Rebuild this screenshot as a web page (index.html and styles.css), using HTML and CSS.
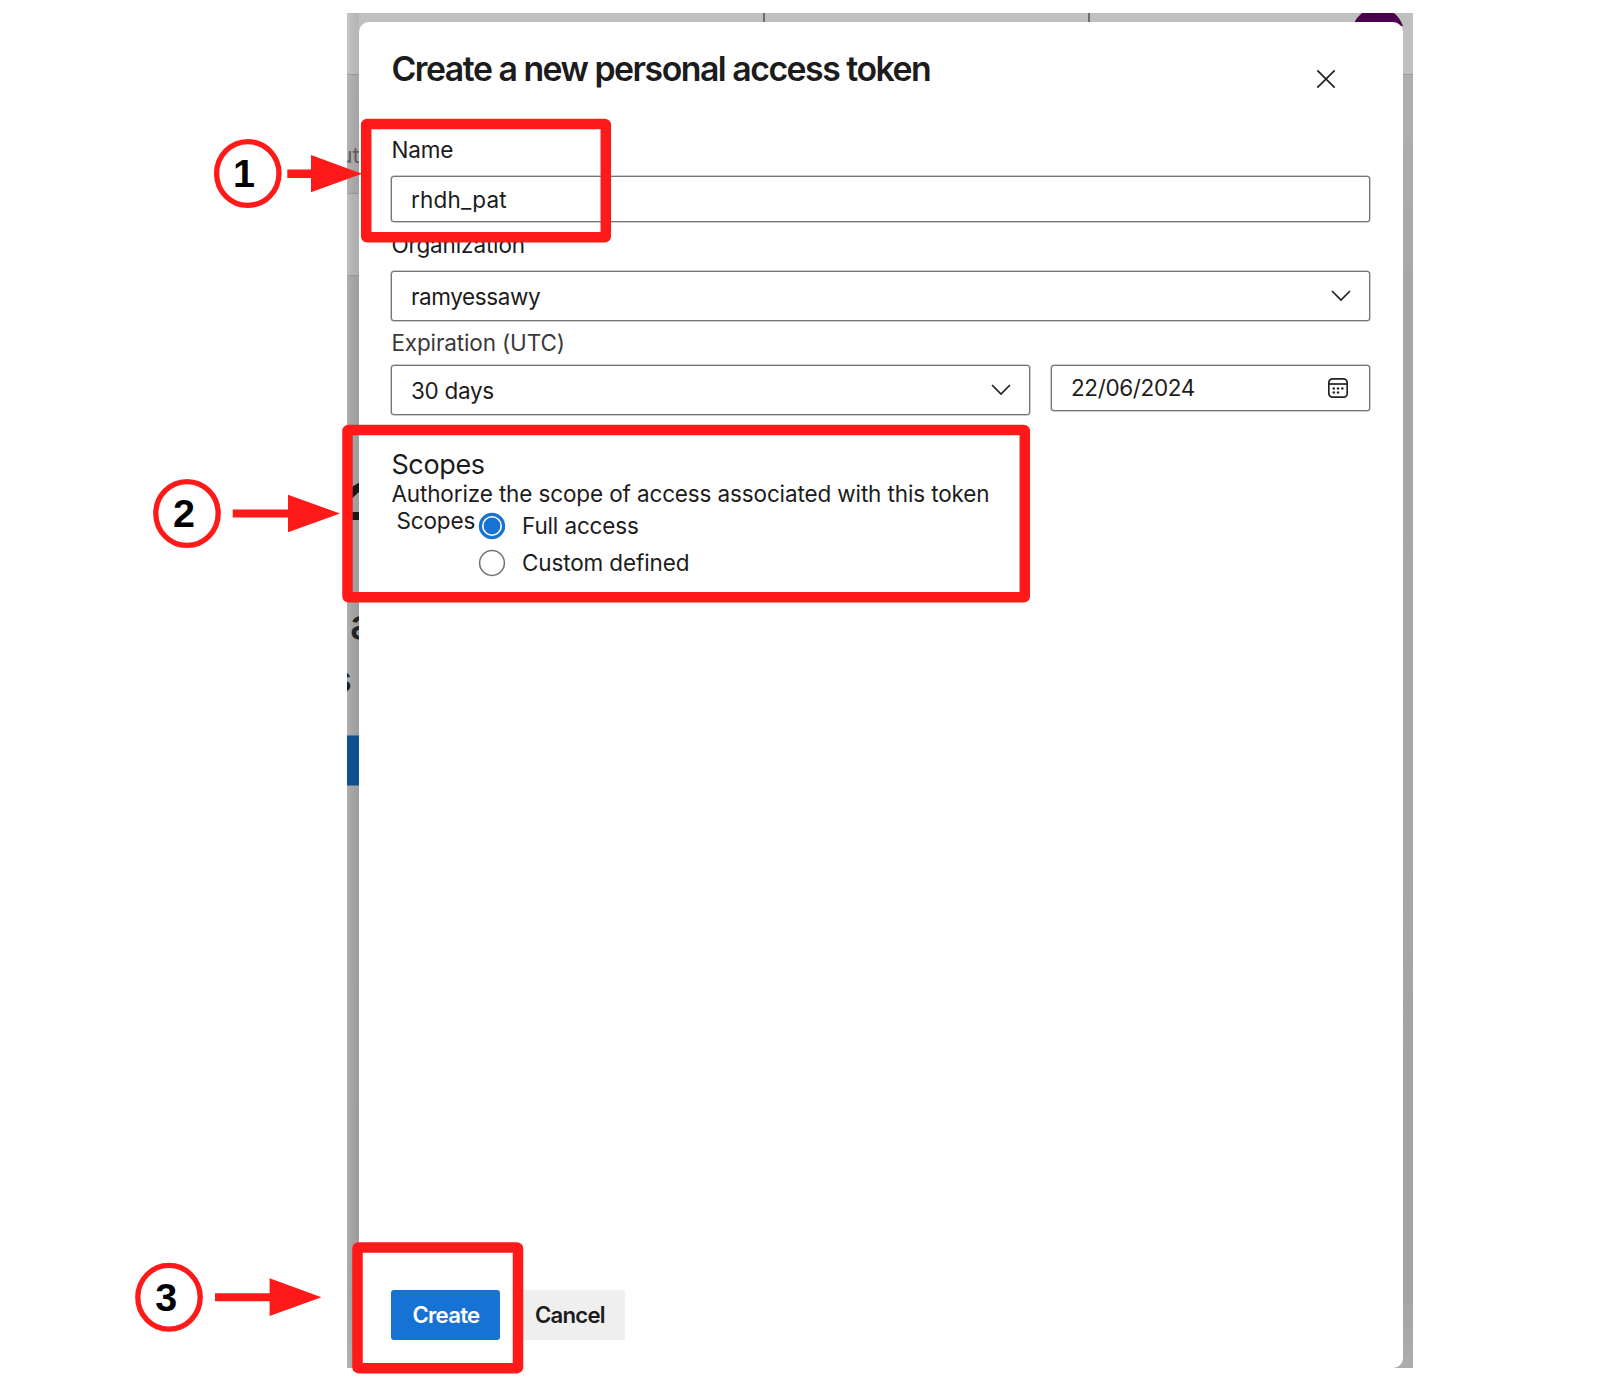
FILE: index.html
```html
<!DOCTYPE html>
<html lang="en">
<head>
<meta charset="utf-8">
<title>Create a new personal access token</title>
<link rel="stylesheet" href="styles.css">
</head>
<body>
<main class="figure">
  <section class="shot">
    <svg class="backdrop" width="1066" height="1355" viewBox="347 13 1066 1355" aria-hidden="true">
      <defs>
        <linearGradient id="page" x1="0" y1="0" x2="0" y2="1">
          <stop offset="0" stop-color="#b2b2b2"/><stop offset=".2" stop-color="#a7a7a7"/><stop offset=".95" stop-color="#a4a4a4"/><stop offset="1" stop-color="#adadad"/>
        </linearGradient>
        <linearGradient id="left" x1="0" x2="1"><stop offset="0" stop-color="#fff" stop-opacity=".1"/><stop offset="1" stop-color="#000" stop-opacity=".05"/></linearGradient>
      </defs>
      <rect x="347" y="13" width="1066" height="1355" fill="url(#page)"/>
      <rect x="347" y="13" width="1066" height="61" fill="#c0c0c0"/>
      <rect x="347" y="193" width="20" height="82" fill="#b8b8b8"/>
      <path d="M347 74.500h1066M347 193.500h20M347 275.500h20" stroke="#999"/>
      <rect x="347" y="13" width="12" height="1355" fill="url(#left)"/>
      <path d="M764 13v9M1089 13v9" stroke="#4a4a4a" stroke-width="1.400"/>
      <path d="M1354 23Q1357 17 1362 13H1394Q1400 18 1403 26Z" fill="#4b004b"/>
      <path d="M347 490 360 482v9l-13 12zM347 512h13v8h-13z" fill="#181818"/>
      <rect x="347" y="735.500" width="13" height="50" fill="#104f8e"/>
      <text class="bg-tab" x="339.500" y="162.500">ut</text>
      <text class="bg-title" x="350" y="639">a</text>
      <text class="bg-sub" x="332.500" y="692">s</text>
    </svg>
    <div class="panel">
      <header class="head">
        <h1 class="title">Create a new personal access token</h1>
        <svg class="close" width="20" height="20" viewBox="0 0 20 20"><path d="M1.300 1.300l17.400 17.400M18.700 1.300L1.300 18.700"/></svg>
      </header>
      <div class="label name-label"><span class="t-name">Name</span></div>
      <div class="box short"><span class="t-pat">rhdh_pat</span></div>
      <div class="label org-label"><span class="t-org">Organization</span></div>
      <div class="box tall"><span class="t-ramy">ramyessawy</span><svg class="chev" width="20" height="12" viewBox="0 0 20 12"><path d="M1 1l9 9 9-9"/></svg></div>
      <div class="label exp-label"><span class="t-exp">Expiration (UTC)</span></div>
      <div class="dates">
        <div class="box tall days"><span class="t-days">30 days</span><svg class="chev" width="20" height="12" viewBox="0 0 20 12"><path d="M1 1l9 9 9-9"/></svg></div>
        <div class="box short date"><span class="t-date">22/06/2024</span>
          <svg class="cal" width="20" height="20" viewBox="0 0 20 20"><rect x=".8" y=".8" width="18.400" height="18.400" rx="4"/><path d="M1 6h18"/><g class="dots"><circle cx="5.800" cy="10.500" r="1.200"/><circle cx="10" cy="10.500" r="1.200"/><circle cx="14.400" cy="10.500" r="1.200"/><circle cx="5.800" cy="14.500" r="1.200"/><circle cx="10" cy="14.500" r="1.200"/></g></svg>
        </div>
      </div>
      <h2 class="scopes">Scopes</h2>
      <p class="hint">Authorize the scope of access associated with this token</p>
      <div class="choice">
        <span class="legend">Scopes</span>
        <div class="options">
          <div class="option"><svg width="28" height="28" viewBox="0 0 28 28"><circle cx="14" cy="14" r="11.600" fill="#fff" stroke="#1673d4" stroke-width="3.200"/><circle cx="14" cy="14" r="8.400" fill="#1673d4"/></svg><span>Full access</span></div>
          <div class="option"><svg width="28" height="28" viewBox="0 0 28 28"><circle cx="14" cy="14" r="12.400" fill="#fff" stroke="#747474" stroke-width="1.500"/></svg><span>Custom defined</span></div>
        </div>
      </div>
      <footer class="actions">
        <span class="btn primary">Create</span>
        <span class="btn">Cancel</span>
      </footer>
    </div>
  </section>
  <svg class="notes" width="1598" height="1400" viewBox="0 0 1598 1400">
    <g class="frames">
      <rect x="366.200" y="124" width="239.600" height="113.300" rx="1"/>
      <rect x="347.500" y="430" width="677.300" height="167.300" rx="1"/>
      <rect x="357.500" y="1247.500" width="160.500" height="120.700" rx="1"/>
      <ellipse cx="247.800" cy="173.500" rx="31.200" ry="31.900"/>
      <ellipse cx="187" cy="513.500" rx="31.200" ry="31.900"/>
      <ellipse cx="169" cy="1297.300" rx="31.200" ry="31.900"/>
    </g>
    <g class="arrows">
      <path d="M287.300 169.500H311V155L362 173.700 311 192.300V178H287.300z"/>
      <path d="M232.700 509.500H288V494.700L340 513.500 288 532.300V517.500H232.700z"/>
      <path d="M215 1293.200H269.600V1278.300L321.500 1297.300 269.600 1316V1301.300H215z"/>
    </g>
    <text class="num" x="244" y="187">1</text>
    <text class="num" x="184" y="527">2</text>
    <text class="num" x="166.300" y="1311">3</text>
  </svg>
</main>
</body>
</html>
```
FILE: styles.css
```css
* { box-sizing: border-box; }
body { margin: 0; background: #fff; }
.figure { position: relative; width: 1598px; height: 1400px; padding: 13px 0 0 347px; overflow: hidden; }
.shot {
  position: relative; width: 1066px; height: 1355px; padding: 8.500px 10px 0 12px; overflow: hidden;
  font: 22.500px/28px Inter, "Liberation Sans", sans-serif; letter-spacing: -.13px; color: #1c1c1c;
}
.backdrop { position: absolute; left: 0; top: 0; }
.bg-tab { font-size: 22px; fill: #5c5c5c; }
.bg-title { font-size: 42px; font-weight: 500; fill: #222; }
.bg-sub { font-size: 36px; font-weight: 500; fill: #222; }
.panel {
  position: relative; width: 1044px; height: 1346.500px; padding: 24px 32.600px 0 32.400px; background: #fff;
  border-radius: 10px 10px 10px 0; display: flex; flex-direction: column; white-space: nowrap;
}
.head { display: flex; justify-content: space-between; height: 90.500px; padding-right: 34px; }
.title { margin: 0; font-size: 33.800px; line-height: 46px; font-weight: 600; letter-spacing: -1.480px; }
.close { margin-top: 23.200px; fill: none; stroke: #222; stroke-width: 1.700; }
.label { height: 28px; }
.name-label { margin: 0 0 12px; }
.org-label { margin: 8.500px 0 12.500px; }
.exp-label { margin: 8px 0 7.500px; color: #3a3a3a; }
.box {
  display: flex; align-items: center; justify-content: space-between; padding: 0 18px 0 18.500px;
  border: 1px solid #747474; box-shadow: 0 0 0 .5px #999; border-radius: 3px; background: #fff;
}
.short { height: 46px; }
.tall { height: 50px; }
.box span { padding-top: 1px; }
.tall span { padding-top: 2px; }
.t-pat { letter-spacing: .22px; }
.t-ramy { letter-spacing: -.4px; }
.t-days { letter-spacing: -.28px; }
.t-date { letter-spacing: -.36px; }
.chev { fill: none; stroke: #222; stroke-width: 1.700; }
.cal { margin-right: 3px; fill: none; stroke: #222; stroke-width: 1.700; }
.dots { fill: #222; stroke: none; }
.dates { display: flex; align-items: flex-start; justify-content: space-between; }
.days { width: 639px; }
.date { width: 319px; }
.scopes { margin: 35px 0 0; height: 30px; font-size: 27px; line-height: 30px; font-weight: 400; letter-spacing: -.35px; }
.hint { margin: 0; height: 28px; }
.choice { display: flex; padding-left: 5px; height: 84px; }
.legend { width: 82px; margin-top: -1px; }
.options { display: flex; flex-direction: column; gap: 9px; padding-top: 4px; }
.option { display: flex; align-items: center; gap: 15.600px; height: 28px; }
.actions { display: flex; gap: 14px; margin-top: auto; padding-bottom: 28.500px; }
.btn {
  width: 111px; height: 50px; line-height: 50px; text-align: center; border-radius: 3px;
  background: #efefef; font-size: 22.200px; font-weight: 600; letter-spacing: -0.75px;
}
.primary { width: 109px; background: #1673d4; color: #fff; }
.notes { position: absolute; left: 0; top: 0; }
.frames { fill: none; stroke: #ff1a1a; stroke-linejoin: round; }
.frames rect { stroke-width: 10.500px; }
.frames ellipse { stroke-width: 5.300px; fill: #fff; }
.arrows { fill: #ff1a1a; }
.num { font: bold 39.500px "Liberation Sans", sans-serif; text-anchor: middle; fill: #000; }
```
